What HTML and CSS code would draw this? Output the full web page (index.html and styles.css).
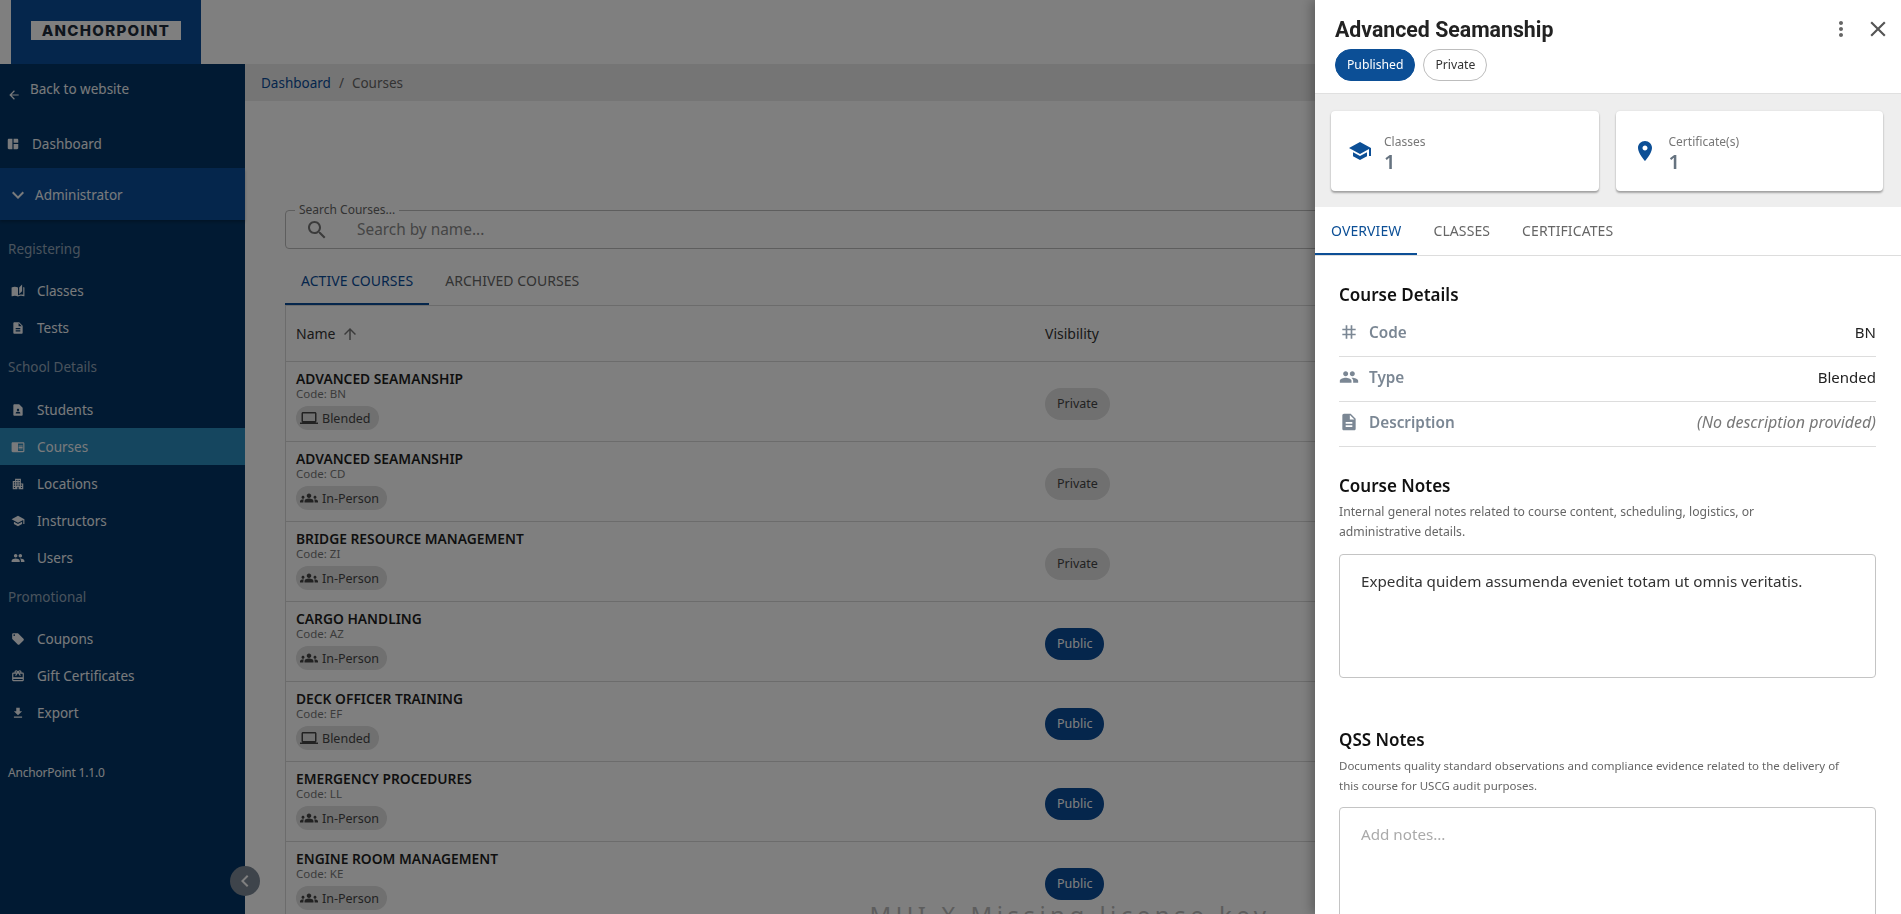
FILE: index.html
```html
<!DOCTYPE html>
<html lang="en">
<head>
    <meta charset="UTF-8">
    <meta name="viewport" content="width=device-width, initial-scale=1.0">
    <title>AnchorPoint - Courses</title>
    <link rel="stylesheet" href="styles.css">
</head>
<body>

<svg class="icon-defs" aria-hidden="true">
    <symbol id="i-back" viewBox="0 0 24 24"><path d="M20 11H7.83l5.59-5.59L12 4l-8 8 8 8 1.41-1.41L7.83 13H20v-2z"/></symbol>
    <symbol id="i-dashboard" viewBox="0 0 24 24"><path d="M11 21H5c-1.1 0-2-.9-2-2V5c0-1.1.9-2 2-2h6v18zm2 0h6c1.1 0 2-.9 2-2v-7h-8v9zm8-11V5c0-1.1-.9-2-2-2h-6v7h8z"/></symbol>
    <symbol id="i-expand" viewBox="0 0 24 24"><path d="M16.59 8.59L12 13.17 7.41 8.59 6 10l6 6 6-6z"/></symbol>
    <symbol id="i-classes" viewBox="0 0 24 24"><path d="M19 1l-5 5v11l5-4.5V1zM1 6v14.65c0 .25.25.5.5.5.1 0 .15-.05.25-.05C3.1 20.45 5.05 20 6.5 20c1.95 0 4.05.4 5.5 1.5V6c-1.45-1.1-3.55-1.5-5.5-1.5S2.45 4.9 1 6zm22 13.5V6c-.6-.45-1.25-.75-2-1v13.5c-1.1-.35-2.3-.5-3.5-.5-1.7 0-4.15.65-5.5 1.5v2c1.35-.85 3.8-1.5 5.5-1.5 1.65 0 3.35.3 4.75 1.05.1.05.15.05.25.05.25 0 .5-.25.5-.5v-1.1z"/></symbol>
    <symbol id="i-doc" viewBox="0 0 24 24"><path d="M14 2H6c-1.1 0-1.99.9-1.99 2L4 20c0 1.1.89 2 1.99 2H18c1.1 0 2-.9 2-2V8l-6-6zm2 16H8v-2h8v2zm0-4H8v-2h8v2zm-3-5V3.5L18.5 9H13z"/></symbol>
    <symbol id="i-student" viewBox="0 0 24 24"><path d="M14 2H6c-1.1 0-2 .9-2 2v16c0 1.1.9 2 2 2h12c1.1 0 2-.9 2-2V8l-6-6zm-2 8c1.1 0 2 .9 2 2s-.9 2-2 2-2-.9-2-2 .9-2 2-2zm4 8H8v-.57c0-.81.48-1.53 1.22-1.85.85-.37 1.79-.58 2.78-.58.99 0 1.93.21 2.78.58.74.32 1.22 1.04 1.22 1.85V18z"/></symbol>
    <symbol id="i-courses" viewBox="0 0 24 24"><path d="M13 12h7v1.5h-7zm0-2.5h7V11h-7zm0 5h7V16h-7zM21 4H3c-1.1 0-2 .9-2 2v13c0 1.1.9 2 2 2h18c1.1 0 2-.9 2-2V6c0-1.1-.9-2-2-2zm0 15h-9V6h9v13z"/></symbol>
    <symbol id="i-apartment" viewBox="0 0 24 24"><path d="M17 11V3H7v4H3v14h8v-4h2v4h8V11h-4zM7 19H5v-2h2v2zm0-4H5v-2h2v2zm0-4H5V9h2v2zm4 4H9v-2h2v2zm0-4H9V9h2v2zm0-4H9V5h2v2zm4 8h-2v-2h2v2zm0-4h-2V9h2v2zm0-4h-2V5h2v2zm4 12h-2v-2h2v2zm0-4h-2v-2h2v2z"/></symbol>
    <symbol id="i-school" viewBox="0 0 24 24"><path d="M5 13.18v4L12 21l7-3.82v-4L12 17l-7-3.82zM12 3 1 9l11 6 9-4.91V17h2V9L12 3z"/></symbol>
    <symbol id="i-people" viewBox="0 0 24 24"><path d="M16 11c1.66 0 2.99-1.34 2.99-3S17.66 5 16 5c-1.66 0-3 1.34-3 3s1.34 3 3 3zm-8 0c1.66 0 2.99-1.34 2.99-3S9.66 5 8 5C6.34 5 5 6.34 5 8s1.34 3 3 3zm0 2c-2.33 0-7 1.17-7 3.5V19h14v-2.5c0-2.33-4.67-3.5-7-3.5zm8 0c-.29 0-.62.02-.97.05 1.16.84 1.97 1.97 1.97 3.45V19h6v-2.5c0-2.33-4.67-3.5-7-3.5z"/></symbol>
    <symbol id="i-offer" viewBox="0 0 24 24"><path d="M21.41 11.58l-9-9C12.05 2.22 11.55 2 11 2H4c-1.1 0-2 .9-2 2v7c0 .55.22 1.05.59 1.42l9 9c.36.36.86.58 1.41.58.55 0 1.05-.22 1.41-.59l7-7c.37-.36.59-.86.59-1.41 0-.55-.23-1.06-.59-1.42zM5.5 7C4.67 7 4 6.33 4 5.5S4.67 4 5.5 4 7 4.67 7 5.5 6.33 7 5.5 7z"/></symbol>
    <symbol id="i-gift" viewBox="0 0 24 24"><path d="M20 6h-2.18c.11-.31.18-.65.18-1 0-1.66-1.34-3-3-3-1.05 0-1.96.54-2.5 1.35l-.5.67-.5-.68C10.96 2.54 10.05 2 9 2 7.34 2 6 3.34 6 5c0 .35.07.69.18 1H4c-1.11 0-1.99.89-1.99 2L2 19c0 1.11.89 2 2 2h16c1.11 0 2-.89 2-2V8c0-1.11-.89-2-2-2zm-5-2c.55 0 1 .45 1 1s-.45 1-1 1-1-.45-1-1 .45-1 1-1zM9 4c.55 0 1 .45 1 1s-.45 1-1 1-1-.45-1-1 .45-1 1-1zm11 15H4v-2h16v2zm0-5H4V8h5.08L7 10.83 8.62 12 11 8.76l1-1.36 1 1.36L15.38 12 17 10.83 14.92 8H20v6z"/></symbol>
    <symbol id="i-download" viewBox="0 0 24 24"><path d="M19 9h-4V3H9v6H5l7 7 7-7zM5 18v2h14v-2H5z"/></symbol>
    <symbol id="i-chevron" viewBox="0 0 24 24"><path d="M15.41 7.41 14 6l-6 6 6 6 1.41-1.41L10.83 12z"/></symbol>
    <symbol id="i-search" viewBox="0 0 24 24"><path d="M15.5 14h-.79l-.28-.27C15.41 12.59 16 11.11 16 9.5 16 5.91 13.09 3 9.5 3S3 5.91 3 9.5 5.91 16 9.5 16c1.61 0 3.09-.59 4.23-1.57l.27.28v.79l5 4.99L20.49 19l-4.99-5zm-6 0C7.01 14 5 11.99 5 9.5S7.01 5 9.5 5 14 7.01 14 9.5 11.99 14 9.5 14z"/></symbol>
    <symbol id="i-up" viewBox="0 0 24 24"><path d="M4 12l1.41 1.41L11 7.83V20h2V7.83l5.58 5.59L20 12l-8-8-8 8z"/></symbol>
    <symbol id="i-laptop" viewBox="0 0 24 24"><path d="M20 18c1.1 0 1.99-.9 1.99-2L22 6c0-1.1-.9-2-2-2H4c-1.1 0-2 .9-2 2v10c0 1.1.9 2 2 2H0v2h24v-2h-4zM4 6h16v10H4V6z"/></symbol>
    <symbol id="i-groups" viewBox="0 0 24 24"><path d="M12 12.75c1.63 0 3.07.39 4.24.9 1.08.48 1.76 1.56 1.76 2.73V18H6v-1.61c0-1.18.68-2.26 1.76-2.73 1.17-.52 2.61-.91 4.24-.91zM4 13c1.1 0 2-.9 2-2s-.9-2-2-2-2 .9-2 2 .9 2 2 2zm1.13 1.1c-.37-.06-.74-.1-1.13-.1-.99 0-1.93.21-2.78.58C.48 14.9 0 15.62 0 16.43V18h4.5v-1.61c0-.83.23-1.61.63-2.29zM20 13c1.1 0 2-.9 2-2s-.9-2-2-2-2 .9-2 2 .9 2 2 2zm4 3.43c0-.81-.48-1.53-1.22-1.85-.85-.37-1.79-.58-2.78-.58-.39 0-.76.04-1.13.1.4.68.63 1.46.63 2.29V18H24v-1.57zM12 6c1.66 0 3 1.34 3 3s-1.34 3-3 3-3-1.34-3-3 1.34-3 3-3z"/></symbol>
    <symbol id="i-more" viewBox="0 0 24 24"><path d="M12 8c1.1 0 2-.9 2-2s-.9-2-2-2-2 .9-2 2 .9 2 2 2zm0 2c-1.1 0-2 .9-2 2s.9 2 2 2 2-.9 2-2-.9-2-2-2zm0 6c-1.1 0-2 .9-2 2s.9 2 2 2 2-.9 2-2-.9-2-2-2z"/></symbol>
    <symbol id="i-close" viewBox="0 0 24 24"><path d="M19 6.41 17.59 5 12 10.59 6.41 5 5 6.41 10.59 12 5 17.59 6.41 19 12 13.41 17.59 19 19 17.59 13.41 12z"/></symbol>
    <symbol id="i-place" viewBox="0 0 24 24"><path d="M12 2C8.13 2 5 5.13 5 9c0 5.25 7 13 7 13s7-7.75 7-13c0-3.87-3.13-7-7-7zm0 9.5c-1.38 0-2.5-1.12-2.5-2.5s1.12-2.5 2.5-2.5 2.5 1.12 2.5 2.5-1.12 2.5-2.5 2.5z"/></symbol>
    <symbol id="i-tag" viewBox="0 0 24 24"><path d="M20 10V8h-4V4h-2v4h-4V4H8v4H4v2h4v4H4v2h4v4h2v-4h4v4h2v-4h4v-2h-4v-4h4zm-6 4h-4v-4h4v4z"/></symbol>
</svg>

<header class="topbar">
    <div class="logo-block">
        <div class="logo-plate">ANCHORPOINT</div>
    </div>
</header>

<div class="layout">
    <nav class="sidebar">
        <a class="back-link"><svg class="back-icon"><use href="#i-back"/></svg><span>Back to website</span></a>
        <a class="dash-link"><svg class="nav-icon"><use href="#i-dashboard"/></svg><span>Dashboard</span></a>
        <a class="admin-band"><svg class="admin-icon"><use href="#i-expand"/></svg><span>Administrator</span></a>

        <div class="nav-label first">Registering</div>
        <a class="nav-item"><svg class="nav-icon"><use href="#i-classes"/></svg>Classes</a>
        <a class="nav-item"><svg class="nav-icon"><use href="#i-doc"/></svg>Tests</a>

        <div class="nav-label">School Details</div>
        <a class="nav-item"><svg class="nav-icon"><use href="#i-student"/></svg>Students</a>
        <a class="nav-item active"><svg class="nav-icon"><use href="#i-courses"/></svg>Courses</a>
        <a class="nav-item"><svg class="nav-icon"><use href="#i-apartment"/></svg>Locations</a>
        <a class="nav-item"><svg class="nav-icon"><use href="#i-school"/></svg>Instructors</a>
        <a class="nav-item"><svg class="nav-icon"><use href="#i-people"/></svg>Users</a>

        <div class="nav-label promo">Promotional</div>
        <a class="nav-item"><svg class="nav-icon"><use href="#i-offer"/></svg>Coupons</a>
        <a class="nav-item"><svg class="nav-icon"><use href="#i-gift"/></svg>Gift Certificates</a>
        <a class="nav-item"><svg class="nav-icon"><use href="#i-download"/></svg>Export</a>

        <div class="version">AnchorPoint 1.1.0</div>
        <button class="collapse-btn"><svg><use href="#i-chevron"/></svg></button>
    </nav>

    <main class="main">
        <div class="breadcrumbs"><a>Dashboard</a><span class="sep">/</span><span>Courses</span></div>
        <div class="content">
            <div class="search-box">
                <span class="search-label">Search Courses...</span>
                <svg class="search-icon"><use href="#i-search"/></svg>
                <span class="search-placeholder">Search by name...</span>
            </div>
            <div class="list-tabs">
                <a class="list-tab active">ACTIVE COURSES</a>
                <a class="list-tab">ARCHIVED COURSES</a>
            </div>
            <div class="grid">
                <div class="grid-head">
                    <div class="head-name">Name <svg><use href="#i-up"/></svg></div>
                    <div>Visibility</div>
                </div>
                <div class="grid-row">
                    <div class="course-cell">
                        <div class="course-name">ADVANCED SEAMANSHIP</div>
                        <div class="course-code">Code: BN</div>
                        <span class="type-chip"><svg><use href="#i-laptop"/></svg>Blended</span>
                    </div>
                    <div><span class="vis-chip">Private</span></div>
                </div>
                <div class="grid-row">
                    <div class="course-cell">
                        <div class="course-name">ADVANCED SEAMANSHIP</div>
                        <div class="course-code">Code: CD</div>
                        <span class="type-chip"><svg><use href="#i-groups"/></svg>In-Person</span>
                    </div>
                    <div><span class="vis-chip">Private</span></div>
                </div>
                <div class="grid-row">
                    <div class="course-cell">
                        <div class="course-name">BRIDGE RESOURCE MANAGEMENT</div>
                        <div class="course-code">Code: ZI</div>
                        <span class="type-chip"><svg><use href="#i-groups"/></svg>In-Person</span>
                    </div>
                    <div><span class="vis-chip">Private</span></div>
                </div>
                <div class="grid-row">
                    <div class="course-cell">
                        <div class="course-name">CARGO HANDLING</div>
                        <div class="course-code">Code: AZ</div>
                        <span class="type-chip"><svg><use href="#i-groups"/></svg>In-Person</span>
                    </div>
                    <div><span class="vis-chip public">Public</span></div>
                </div>
                <div class="grid-row">
                    <div class="course-cell">
                        <div class="course-name">DECK OFFICER TRAINING</div>
                        <div class="course-code">Code: EF</div>
                        <span class="type-chip"><svg><use href="#i-laptop"/></svg>Blended</span>
                    </div>
                    <div><span class="vis-chip public">Public</span></div>
                </div>
                <div class="grid-row">
                    <div class="course-cell">
                        <div class="course-name">EMERGENCY PROCEDURES</div>
                        <div class="course-code">Code: LL</div>
                        <span class="type-chip"><svg><use href="#i-groups"/></svg>In-Person</span>
                    </div>
                    <div><span class="vis-chip public">Public</span></div>
                </div>
                <div class="grid-row">
                    <div class="course-cell">
                        <div class="course-name">ENGINE ROOM MANAGEMENT</div>
                        <div class="course-code">Code: KE</div>
                        <span class="type-chip"><svg><use href="#i-groups"/></svg>In-Person</span>
                    </div>
                    <div><span class="vis-chip public">Public</span></div>
                </div>
                <div class="watermark">MUI X Missing license key</div>
            </div>
        </div>
    </main>
</div>

<div class="backdrop"></div>

<aside class="drawer">
    <div class="drawer-head">
        <div class="drawer-title-row">
            <h1>Advanced Seamanship</h1>
            <div class="drawer-actions">
                <svg class="more-icon"><use href="#i-more"/></svg>
                <svg class="close-icon"><use href="#i-close"/></svg>
            </div>
        </div>
        <div class="status-chips">
            <span class="status-chip filled">Published</span>
            <span class="status-chip">Private</span>
        </div>
    </div>

    <div class="stats">
        <div class="stat-card">
            <svg><use href="#i-school"/></svg>
            <div class="stat-text">
                <div class="stat-label">Classes</div>
                <div class="stat-value">1</div>
            </div>
        </div>
        <div class="stat-card">
            <svg><use href="#i-place"/></svg>
            <div class="stat-text">
                <div class="stat-label">Certificate(s)</div>
                <div class="stat-value">1</div>
            </div>
        </div>
    </div>

    <div class="drawer-tabs">
        <a class="drawer-tab active">OVERVIEW</a>
        <a class="drawer-tab">CLASSES</a>
        <a class="drawer-tab">CERTIFICATES</a>
    </div>

    <div class="drawer-body">
        <h2 class="details-title">Course Details</h2>
        <div class="detail-row">
            <span class="detail-key"><svg><use href="#i-tag"/></svg>Code</span>
            <span>BN</span>
        </div>
        <div class="detail-row">
            <span class="detail-key"><svg><use href="#i-people"/></svg>Type</span>
            <span>Blended</span>
        </div>
        <div class="detail-row">
            <span class="detail-key"><svg><use href="#i-doc"/></svg>Description</span>
            <span class="detail-empty">(No description provided)</span>
        </div>

        <h2 class="notes-title">Course Notes</h2>
        <p class="notes-help">Internal general notes related to course content, scheduling, logistics, or<br>administrative details.</p>
        <div class="notes-box">Expedita quidem assumenda eveniet totam ut omnis veritatis.</div>

        <h2 class="notes-title qss">QSS Notes</h2>
        <p class="notes-help tight">Documents quality standard observations and compliance evidence related to the delivery of<br>this course for USCG audit purposes.</p>
        <div class="notes-box empty">Add notes...</div>
    </div>
</aside>

</body>
</html>
```

FILE: styles.css
```css
* {
    box-sizing: border-box;
}
html, body {
    height: 100%;
}
body {
    margin: 0;
    overflow: hidden;
    background-color: #fff;
    color: #222;
    font-family: "Noto Sans", sans-serif;
    font-size: 14px;
}
svg {
    fill: currentColor;
    flex: none;
}
.icon-defs {
    display: none;
}

/* top bar */
.topbar {
    height: 64px;
    padding-left: 11px;
    background-color: #fff;
}
.logo-block {
    width: 190px;
    height: 64px;
    padding: 21px 20px 0;
    background-color: #0a4c98;
}
.logo-plate {
    height: 19px;
    background-color: #fff;
    color: #1c2b3a;
    font-family: Inter, sans-serif;
    font-size: 15px;
    font-weight: 800;
    line-height: 20px;
    letter-spacing: 1.3px;
    text-align: center;
}

.layout {
    display: flex;
    height: 850px;
}

/* sidebar */
.sidebar {
    position: relative;
    width: 245px;
    flex: none;
    background-color: #033566;
    color: #f2f5f8;
    font-size: 13.5px;
}
.back-link {
    display: flex;
    align-items: flex-start;
    height: 50px;
    padding: 16px 0 0 7px;
}
.back-icon {
    width: 14px;
    height: 14px;
    margin: 8px 9px 0 0;
}
.dash-link {
    display: flex;
    align-items: center;
    height: 54px;
    padding: 6px 0 0 6px;
}
.dash-link .nav-icon {
    margin-right: 12px;
}
.admin-band {
    display: flex;
    align-items: center;
    height: 52px;
    padding: 1px 0 0 6px;
    background-color: #0a4c98;
    box-shadow: 0 2px 3px rgba(0, 0, 0, 0.25);
}
.admin-icon {
    width: 24px;
    height: 24px;
    margin-right: 5px;
}
.nav-label {
    height: 45px;
    padding: 11px 0 0 8px;
    line-height: 20px;
    color: #93a6ba;
}
.nav-label.first {
    height: 52px;
    padding-top: 19px;
}
.nav-label.promo {
    height: 44px;
}
.nav-item {
    display: flex;
    align-items: center;
    height: 37px;
    padding-left: 11px;
}
.nav-item.active {
    background-color: #2a8cbe;
}
.nav-icon {
    width: 14px;
    height: 14px;
    margin-right: 12px;
}
.version {
    margin-top: 32px;
    padding-left: 8px;
    line-height: 20px;
    font-size: 12px;
    letter-spacing: -0.2px;
}
.collapse-btn {
    position: absolute;
    left: 230px;
    top: 802px;
    width: 30px;
    height: 30px;
    padding: 3px;
    border: none;
    border-radius: 50%;
    background-color: #7c8896;
    color: #fff;
}
.collapse-btn svg {
    display: block;
    width: 24px;
    height: 24px;
}

/* main */
.main {
    flex: 1;
    min-width: 0;
}
.breadcrumbs {
    height: 37px;
    padding-left: 16px;
    background-color: #ebebeb;
    color: #666;
    line-height: 38px;
    font-size: 13.5px;
}
.breadcrumbs a {
    color: #0a4c98;
}
.sep {
    margin: 0 8px;
}
.content {
    padding: 109px 46px 0 40px;
}
.search-box {
    position: relative;
    display: flex;
    align-items: center;
    height: 39px;
    padding-left: 19px;
    border: 1px solid #bdbdbd;
    border-radius: 4px;
}
.search-label {
    position: absolute;
    left: 9px;
    top: -9px;
    padding: 0 4px;
    background-color: #fff;
    color: #666;
    font-size: 12px;
    line-height: 16px;
}
.search-icon {
    width: 24px;
    height: 24px;
    margin-right: 28px;
    color: #777;
}
.search-placeholder {
    color: #8a8a8a;
    font-size: 15.4px;
}
.list-tabs {
    display: flex;
    height: 50px;
    margin-top: 6px;
}
.list-tab {
    padding: 0 16px;
    line-height: 51px;
    color: #666;
    font-size: 14px;
    letter-spacing: 0.05px;
}
.list-tab.active {
    color: #0a4c98;
    border-bottom: 2px solid #0a4c98;
}
.grid {
    position: relative;
    height: 700px;
    border-top: 1px solid #d8d8d8;
    border-left: 1px solid #d8d8d8;
    border-right: 1px solid #d8d8d8;
}
.grid-head,
.grid-row {
    display: grid;
    grid-template-columns: 749px 1fr;
    align-items: center;
    padding-left: 10px;
    border-bottom: 1px solid #d8d8d8;
}
.grid-head {
    height: 56px;
    color: #333;
}
.head-name {
    display: flex;
    align-items: center;
    gap: 6px;
}
.head-name svg {
    width: 18px;
    height: 18px;
    color: #777;
}
.grid-row {
    height: 80px;
}
.course-cell {
    align-self: start;
    padding-top: 8px;
}
.course-name {
    line-height: 17px;
    font-size: 13.8px;
    font-weight: 600;
    color: #1f1f1f;
}
.course-code {
    line-height: 13px;
    font-size: 11.5px;
    color: #777;
}
.type-chip {
    display: inline-flex;
    align-items: center;
    height: 24px;
    margin-top: 6px;
    padding: 0 8px 0 4px;
    border-radius: 12px;
    background-color: #e0e0e0;
    color: #444;
    font-size: 12.5px;
}
.type-chip svg {
    width: 18px;
    height: 18px;
    margin-right: 4px;
}
.vis-chip {
    display: inline-block;
    height: 32px;
    margin-top: 5px;
    padding: 0 12px;
    border-radius: 16px;
    background-color: #e0e0e0;
    color: #444;
    line-height: 32px;
    font-size: 12.5px;
}
.vis-chip.public {
    background-color: #0a4c98;
    color: #fff;
}
.watermark {
    position: absolute;
    left: 0;
    right: 0;
    top: 592px;
    text-align: center;
    font-size: 24px;
    letter-spacing: 4.5px;
    color: #bbb;
    white-space: nowrap;
}

/* dimmed page and details drawer */
.backdrop {
    position: fixed;
    inset: 0;
    background-color: rgba(0, 0, 0, 0.5);
}
.drawer {
    position: fixed;
    top: 0;
    right: 0;
    bottom: 0;
    width: 586px;
    overflow: hidden;
    background-color: #fff;
    box-shadow: -4px 0 10px rgba(0, 0, 0, 0.25);
}
.drawer-head {
    height: 94px;
    padding: 14px 10px 0 20px;
    border-bottom: 1px solid #e0e0e0;
}
.drawer-title-row {
    display: flex;
    justify-content: space-between;
    align-items: center;
    height: 30px;
}
.drawer-title-row h1 {
    margin: 0;
    font-family: Roboto, sans-serif;
    font-size: 21.3px;
    font-weight: 700;
    color: #222;
}
.drawer-actions {
    display: flex;
    align-items: center;
    color: #666;
}
.more-icon {
    width: 24px;
    height: 24px;
    margin-right: 12px;
}
.close-icon {
    width: 26px;
    height: 26px;
    color: #555;
}
.status-chips {
    display: flex;
    gap: 8px;
    margin-top: 5px;
}
.status-chip {
    height: 32px;
    padding: 0 11px;
    border: 1px solid #bdbdbd;
    border-radius: 16px;
    line-height: 30px;
    font-size: 12.2px;
    color: #333;
}
.status-chip.filled {
    border-color: #0c4f96;
    background-color: #0c4f96;
    color: #fff;
}
.stats {
    display: flex;
    gap: 17px;
    height: 113px;
    padding: 17px 18px 16px 16px;
    background-color: #eee;
}
.stat-card {
    flex: 1;
    display: flex;
    align-items: center;
    gap: 12px;
    height: 80px;
    padding-left: 17px;
    border-radius: 4px;
    background-color: #fff;
    box-shadow: 0 2px 2px rgba(0, 0, 0, 0.3), 0 0 2px rgba(0, 0, 0, 0.1);
    color: #0c4f96;
}
.stat-card svg {
    width: 24px;
    height: 24px;
}
.stat-text {
    padding-top: 5px;
}
.stat-label {
    line-height: 16px;
    font-size: 12px;
    color: #777;
}
.stat-value {
    line-height: 24px;
    font-size: 20px;
    font-weight: 600;
    color: #667380;
}
.drawer-tabs {
    display: flex;
    height: 49px;
    border-bottom: 1px solid #ddd;
}
.drawer-tab {
    height: 48px;
    padding: 0 16px;
    line-height: 48px;
    color: #666;
    font-size: 14px;
    letter-spacing: 0.1px;
}
.drawer-tab.active {
    border-bottom: 2px solid #0c4f96;
    color: #0c4f96;
}
.drawer-body {
    padding: 27px 25px 0 24px;
}
.drawer-body h2 {
    margin: 0;
    line-height: 24px;
    font-size: 17px;
    font-weight: 600;
    color: #111;
}
.details-title {
    margin-bottom: 5px !important;
}
.detail-row {
    display: flex;
    justify-content: space-between;
    align-items: flex-start;
    height: 45px;
    padding-top: 10px;
    border-bottom: 1px solid #ddd;
    line-height: 20px;
    font-size: 15px;
    color: #222;
}
.detail-key {
    display: flex;
    align-items: center;
    gap: 10px;
    color: #7b8794;
    font-weight: 600;
    font-size: 15.3px;
}
.detail-key svg {
    width: 20px;
    height: 20px;
}
.detail-empty {
    font-size: 16px;
    font-style: italic;
    color: #777;
}
.notes-title {
    margin-top: 27px !important;
}
.notes-title.qss {
    margin-top: 50px !important;
}
.notes-help {
    margin: 4px 0 12px;
    line-height: 20px;
    font-size: 12.2px;
    color: #666;
}
.notes-help.tight {
    line-height: 19.5px;
    font-size: 11.5px;
}
.notes-box {
    height: 124px;
    padding: 15px 21px;
    border: 1px solid #c4c4c4;
    border-radius: 4px;
    line-height: 22px;
    font-size: 15.2px;
    color: #333;
}
.notes-box.empty {
    color: #aaa;
}
```
